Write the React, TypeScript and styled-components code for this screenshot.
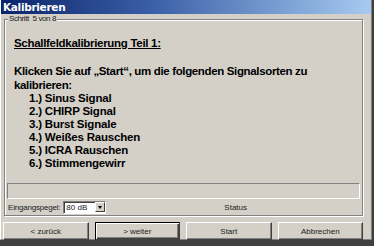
import styled, { createGlobalStyle } from "styled-components";

const Global = createGlobalStyle`
  html, body {
    margin: 0;
    padding: 0;
    background: #404040;
  }
  body {
    font-family: "Liberation Sans", Arial, sans-serif;
  }
`;

const Window = styled.div`
  width: 372px;
  height: 240px;
  display: flex;
  flex-direction: column;
  background: #d4d0c8;
  border-right: 1px solid #808080;
  border-bottom: 1px solid #808080;
  border-left: 1px solid #ffffff;
  box-sizing: border-box;
`;

const TitleBar = styled.div`
  height: 14px;
  flex-shrink: 0;
  display: flex;
  align-items: center;
  padding-left: 2px;
  background: linear-gradient(to right, #0a246a 0%, #3a5ea6 40%, #a6caf0 100%);
  color: #ffffff;
  font-family: "DejaVu Sans", Tahoma, sans-serif;
  font-weight: bold;
  font-size: 10.5px;
  letter-spacing: -0.3px;
`;

const Body = styled.div`
  flex: 1;
  display: flex;
  flex-direction: column;
  padding: 5px 8px 0 2px;
`;

const Group = styled.div`
  position: relative;
  margin-left: 1px;
  height: 195px;
  flex-shrink: 0;
  padding: 0 2px;
  border: 1px solid #808080;
  box-shadow: inset 1px 1px 0 #ffffff, 1px 1px 0 #ffffff;
  display: flex;
  flex-direction: column;
`;

const Legend = styled.span`
  position: absolute;
  top: -6px;
  left: 3px;
  padding: 0 1px;
  background: #d4d0c8;
  font-size: 8px;
  line-height: 10px;
  color: #202020;
  letter-spacing: -0.4px;
  white-space: pre;
`;

const Content = styled.div`
  padding: 17px 0 0 7px;
  color: #000000;
  font-size: 11.5px;
  font-weight: bold;
`;

const Heading = styled.div`
  font-size: 11.5px;
  letter-spacing: -0.3px;
  text-decoration: underline;
  margin-bottom: 15px;
`;

const Para = styled.div`
  line-height: 14px;
  letter-spacing: -0.35px;
`;

const List = styled.ol`
  list-style: none;
  margin: 0;
  padding: 0 0 0 15px;
  line-height: 13px;
  letter-spacing: -0.2px;
`;

const StatusBox = styled.div`
  margin-top: auto;
  height: 14px;
  border-top: 1px solid #808080;
  border-left: 1px solid #808080;
  border-bottom: 1px solid #ffffff;
  border-right: 1px solid #ffffff;
`;

const ControlRow = styled.div`
  display: flex;
  align-items: center;
  height: 16px;
  margin-left: 1px;
  font-size: 8px;
  color: #202020;
`;

const Label = styled.span`
  letter-spacing: -0.2px;
  margin-right: 3px;
`;

const Select = styled.div`
  width: 39px;
  height: 11px;
  background: #ffffff;
  border-top: 1px solid #808080;
  border-left: 1px solid #808080;
  border-bottom: 1px solid #ffffff;
  border-right: 1px solid #ffffff;
  box-shadow: inset 1px 1px 0 #404040;
  display: flex;
  align-items: center;
  justify-content: space-between;
  padding-left: 2px;
`;

const DropButton = styled.div`
  width: 10px;
  height: 10px;
  background: #d4d0c8;
  border-top: 1px solid #ffffff;
  border-left: 1px solid #ffffff;
  border-bottom: 1px solid #404040;
  border-right: 1px solid #404040;
  box-sizing: border-box;
  display: flex;
  align-items: center;
  justify-content: center;
`;

const Arrow = styled.div`
  width: 0;
  height: 0;
  border-left: 2.5px solid transparent;
  border-right: 2.5px solid transparent;
  border-top: 3px solid #000000;
`;

const StatusLabel = styled.span`
  margin-left: 118px;
`;

const ButtonRow = styled.div`
  display: flex;
  gap: 6px;
  margin-top: 6px;
`;

const Button = styled.div<{ $default?: boolean }>`
  width: 86px;
  height: 18px;
  box-sizing: border-box;
  display: flex;
  align-items: center;
  justify-content: center;
  font-size: 8px;
  color: #202020;
  background: #d4d0c8;
  border-top: 1px solid ${(p) => (p.$default ? "#000000" : "#ffffff")};
  border-left: 1px solid ${(p) => (p.$default ? "#000000" : "#ffffff")};
  border-bottom: 1px solid #404040;
  border-right: 1px solid #404040;
  box-shadow: ${(p) =>
    p.$default
      ? "inset 1px 1px 0 #ffffff, inset -1px -1px 0 #404040, inset -2px -2px 0 #808080"
      : "inset -1px -1px 0 #808080"};
`;

const items = [
  "1.) Sinus Signal",
  "2.) CHIRP Signal",
  "3.) Burst Signale",
  "4.) Weißes Rauschen",
  "5.) ICRA Rauschen",
  "6.) Stimmengewirr",
];

function App() {
  return (
    <>
      <Global />
      <Window>
        <TitleBar>Kalibrieren</TitleBar>
        <Body>
          <Group>
            <Legend>Schritt  5 von 8</Legend>
            <Content>
              <Heading>Schallfeldkalibrierung Teil 1:</Heading>
              <Para>
                Klicken Sie auf „Start“, um die folgenden Signalsorten zu
                <br />
                kalibrieren:
              </Para>
              <List>
                {items.map((it) => (
                  <li key={it}>{it}</li>
                ))}
              </List>
            </Content>
            <StatusBox />
            <ControlRow>
              <Label>Eingangspegel:</Label>
              <Select>
                80 dB
                <DropButton>
                  <Arrow />
                </DropButton>
              </Select>
              <StatusLabel>Status</StatusLabel>
            </ControlRow>
          </Group>
          <ButtonRow>
            <Button>&lt; zurück</Button>
            <Button $default>&gt; weiter</Button>
            <Button>Start</Button>
            <Button>Abbrechen</Button>
          </ButtonRow>
        </Body>
      </Window>
    </>
  );
}

export default App;
